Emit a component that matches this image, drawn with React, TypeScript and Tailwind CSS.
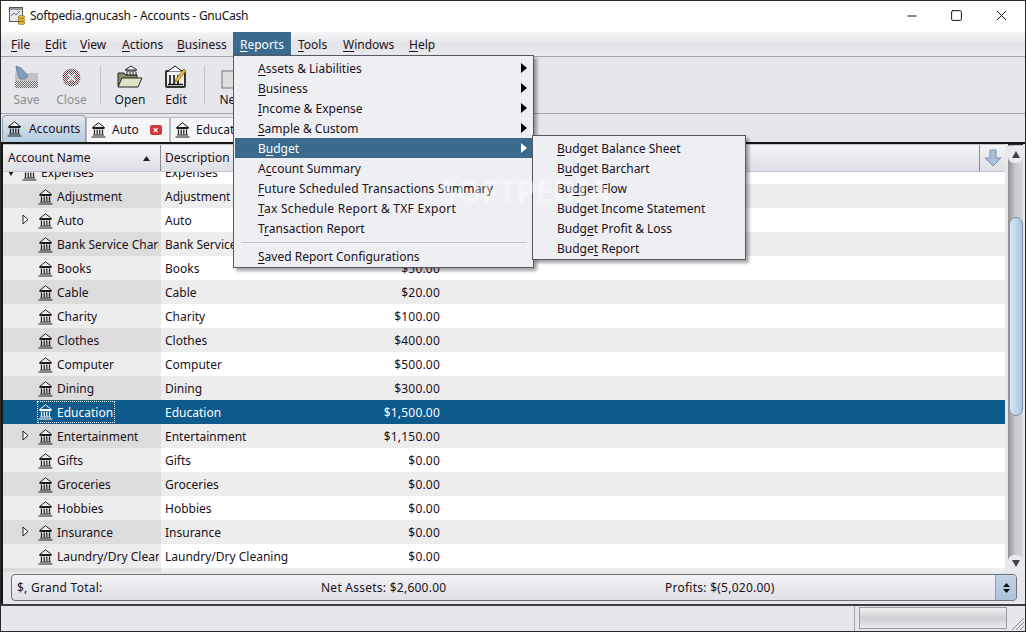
import type { ReactNode } from "react";
import { Minus, Square, X } from "lucide-react";

/** Underlines the letter that follows "_" in a menu label */
const Mnemonic = ({ text }: { text: string }) => {
    const i = text.indexOf("_");
    if (i < 0) return <>{text}</>;
    return (
        <>
            {text.slice(0, i)}
            <span className="underline underline-offset-2">{text[i + 1]}</span>
            {text.slice(i + 2)}
        </>
    );
};

/** Bank building glyph used for accounts */
const BankIcon = ({ light = false }: { light?: boolean }) => {
    const c = light ? "#ffffff" : "#1c1c1c";
    return (
        <svg width="15" height="16" viewBox="0 0 15 16" className="shrink-0">
            <path d="M7.5 0.8 L13.5 5.5 H1.5 Z" fill={light ? "#0f5a8c" : "#f4f4f4"} stroke={c} strokeWidth="1" />
            <path d="M1.5 6.5H13.5" stroke={c} strokeWidth="1" />
            <path d="M3.5 7.5V12.5M6.2 7.5V12.5M8.8 7.5V12.5M11.5 7.5V12.5" stroke={c} strokeWidth="1.2" />
            <path d="M2 13H13M0.5 15H14.5" stroke={c} strokeWidth="1.1" />
        </svg>
    );
};

/** Dither used by the disabled toolbar icons */
const Dither = ({ id, color }: { id: string; color: string }) => (
    <pattern id={id} width="2" height="2" patternUnits="userSpaceOnUse">
        <rect width="2" height="2" fill="#e6e7eb" />
        <rect width="1" height="1" fill={color} />
        <rect x="1" y="1" width="1" height="1" fill={color} />
    </pattern>
);

const rows: { name: string; desc: string; total: string; expander?: boolean }[] = [
    { name: "Adjustment", desc: "Adjustment", total: "" },
    { name: "Auto", desc: "Auto", total: "", expander: true },
    { name: "Bank Service Charge", desc: "Bank Service Charge", total: "" },
    { name: "Books", desc: "Books", total: "$50.00" },
    { name: "Cable", desc: "Cable", total: "$20.00" },
    { name: "Charity", desc: "Charity", total: "$100.00" },
    { name: "Clothes", desc: "Clothes", total: "$400.00" },
    { name: "Computer", desc: "Computer", total: "$500.00" },
    { name: "Dining", desc: "Dining", total: "$300.00" },
    { name: "Education", desc: "Education", total: "$1,500.00" },
    { name: "Entertainment", desc: "Entertainment", total: "$1,150.00", expander: true },
    { name: "Gifts", desc: "Gifts", total: "$0.00" },
    { name: "Groceries", desc: "Groceries", total: "$0.00" },
    { name: "Hobbies", desc: "Hobbies", total: "$0.00" },
    { name: "Insurance", desc: "Insurance", total: "$0.00", expander: true },
    { name: "Laundry/Dry Cleaning", desc: "Laundry/Dry Cleaning", total: "$0.00" },
];

const menuBar = [
    { label: "_File", width: "w-[34px]" },
    { label: "_Edit", width: "w-[35px]" },
    { label: "_View", width: "w-[42px]" },
    { label: "_Actions", width: "w-[55px]" },
    { label: "_Business", width: "w-[63px]" },
    { label: "_Reports", width: "w-[58px]" },
    { label: "_Tools", width: "w-[45px]" },
    { label: "_Windows", width: "w-[66px]" },
    { label: "_Help", width: "w-[40px]" },
];

const reportItems = [
    { label: "_Assets & Liabilities", sub: true },
    { label: "_Business", sub: true },
    { label: "_Income & Expense", sub: true },
    { label: "_Sample & Custom", sub: true },
    { label: "B_udget", sub: true, active: true },
    { label: "A_ccount Summary" },
    { label: "_Future Scheduled Transactions Summary", spacing: "tracking-[0.13px]" },
    { label: "_Tax Schedule Report & TXF Export", spacing: "tracking-[0.27px]" },
    { label: "T_ransaction Report" },
];

const budgetItems = [
    "_Budget Balance Sheet",
    "B_udget Barchart",
    "Bu_dget Flow",
    "Budget Income Statement",
    "Budg_et Profit & Loss",
    "Budge_t Report",
];

/** Toolbar button with icon above its label */
const ToolButton = ({ icon, label, disabled, width }: { icon: ReactNode; label: string; disabled?: boolean; width: string }) => (
    <div className={`flex shrink-0 flex-col items-center ${width}`}>
        <div className="flex h-[26px] items-end">{icon}</div>
        <span className={`mt-[3px] leading-[16px] ${disabled ? "text-[#8a8c94]" : "text-[#141414]"}`}>{label}</span>
    </div>
);

const App = () => {
    return (
        <div
            className="relative flex h-[632px] w-[1026px] flex-col overflow-hidden border border-[#2a2a2a] bg-[#e6e7eb] text-[12px] text-[#1a1020]"
            style={{ fontFamily: '"Noto Sans", sans-serif' }}>
            {/* Title bar */}
            <div className="flex h-[31px] shrink-0 items-center bg-white pb-[2px] pl-[8px]">
                <svg width="17" height="18" viewBox="0 0 17 18" className="shrink-0">
                    <rect x="0.5" y="0.5" width="13" height="14" fill="#e8e8e8" stroke="#555" />
                    <path d="M2 9l3-3 2 2 4-4" stroke="#4a6fb0" fill="none" />
                    <rect x="1" y="1" width="12" height="2" fill="#9a9a9a" />
                    <ellipse cx="12.5" cy="10" rx="3.5" ry="1.6" fill="#e0b830" stroke="#8a6a10" strokeWidth="0.6" />
                    <ellipse cx="12.5" cy="13" rx="3.5" ry="1.6" fill="#e0b830" stroke="#8a6a10" strokeWidth="0.6" />
                    <ellipse cx="12.5" cy="16" rx="3.5" ry="1.6" fill="#e0b830" stroke="#8a6a10" strokeWidth="0.6" />
                </svg>
                <span className="ml-[4px] tracking-[-0.24px] text-[#111]">Softpedia.gnucash - Accounts - GnuCash</span>
                <div className="ml-auto flex items-center pr-[1px]">
                    <div className="flex w-[45px] justify-center"><Minus size={14} strokeWidth={1} absoluteStrokeWidth /></div>
                    <div className="flex w-[45px] justify-center"><Square size={13} strokeWidth={1} absoluteStrokeWidth /></div>
                    <div className="flex w-[45px] justify-center"><X size={17} strokeWidth={1} absoluteStrokeWidth /></div>
                </div>
            </div>

            {/* Menu bar */}
            <div className="flex h-[25px] shrink-0 items-center border-b border-[#a3a3ab] bg-gradient-to-b from-[#f7f7f8] via-[#e2e3e7] to-[#e9eaee] pl-[3px]">
                {menuBar.map((m) => (
                    <div
                        key={m.label}
                        className={`flex h-[24px] items-center pt-[2px] pl-[7px] whitespace-nowrap ${m.width} ${m.label === "_Reports" ? "bg-[#3a6a8e] text-white" : ""}`}>
                        <span><Mnemonic text={m.label} /></span>
                    </div>
                ))}
            </div>

            {/* Toolbar */}
            <div className="flex h-[57px] shrink-0 items-center border-b border-[#a3a3ab] pl-[3px]">
                <ToolButton
                    width="w-[45px]"
                    disabled
                    label="Save"
                    icon={
                        <svg width="26" height="24" viewBox="0 0 26 24">
                            <defs><Dither id="saveDither" color="#6a6a6a" /></defs>
                            <path d="M1 8h23v14a1 1 0 0 1-1 1H2a1 1 0 0 1-1-1z" fill="#c2c2c2" />
                            <rect x="1" y="16" width="23" height="7" rx="1" fill="url(#saveDither)" />
                            <path d="M2 1l5 2 7 8-3 3H6L3 7z" fill="#7f9fc2" stroke="#5d7288" strokeWidth="0.8" />
                        </svg>
                    }
                />
                <ToolButton
                    width="w-[45px]"
                    disabled
                    label="Close"
                    icon={
                        <svg width="19" height="19" viewBox="0 0 19 19" className="mb-[2px]">
                            <defs><Dither id="closeDither" color="#6e3f45" /></defs>
                            <circle cx="9.5" cy="9.5" r="9" fill="url(#closeDither)" />
                            <path d="M6 6l7 7M13 6l-7 7" stroke="#e8e8e8" strokeWidth="2.4" />
                        </svg>
                    }
                />
                <div className="mr-[5px] ml-[6px] h-[38px] w-px bg-[#c4c4c9]" />
                <ToolButton
                    width="w-[48px]"
                    label="Open"
                    icon={
                        <svg width="26" height="24" viewBox="0 0 26 24">
                            <path d="M1 8h6l2 2h11v11H1z" fill="#8c8c68" stroke="#222" />
                            <path d="M1 22l4-9h20l-4 9z" fill="#e2e2c4" stroke="#222" />
                            <path d="M14 1l6 4H8z" fill="#fff" stroke="#222" />
                            <path d="M9 6h10M10 7v4M13 7v4M16 7v4M19 7v4" stroke="#222" />
                        </svg>
                    }
                />
                <ToolButton
                    width="w-[44px]"
                    label="Edit"
                    icon={
                        <svg width="24" height="24" viewBox="0 0 24 24">
                            <rect x="1" y="5" width="21" height="18" rx="2" fill="#333" />
                            <path d="M11 1l8 6H3z" fill="#fff" stroke="#111" />
                            <rect x="3" y="7" width="17" height="14" fill="#f2f2f2" />
                            <path d="M6 10v9M10 10v9M14 10v9M4 19.5h15" stroke="#111" strokeWidth="1.6" />
                            <path d="M12 14l8-10 2 2-8 10-3 1z" fill="#e8c040" stroke="#7a5a10" strokeWidth="0.7" />
                        </svg>
                    }
                />
                <div className="mr-[5px] ml-[6px] h-[38px] w-px bg-[#c4c4c9]" />
                <ToolButton
                    width="w-[44px]"
                    label="New"
                    icon={
                        <svg width="24" height="24" viewBox="0 0 24 24">
                            <rect x="2" y="6" width="19" height="17" fill="#ddd" stroke="#777" />
                        </svg>
                    }
                />
            </div>

            {/* Tabs */}
            <div className="flex h-[30px] shrink-0 items-end border-b-2 border-[#161616] pl-px">
                <div className="flex h-[27px] w-[84px] items-center gap-[7px] rounded-t-[4px] border border-b-0 border-[#8fa0b4] bg-gradient-to-b from-[#e4e8ee] to-[#b4cbe0] pl-[4px]">
                    <BankIcon />
                    <span>Accounts</span>
                </div>
                <div className="flex h-[25px] w-[84px] items-center gap-[6px] border-x border-t border-[#b9b9be] bg-[#f6f6f8] pl-[4px]">
                    <BankIcon />
                    <span>Auto</span>
                    <span className="ml-[5px] flex h-[10px] w-[12px] items-center justify-center rounded-[2px] bg-[#d0383c] text-[10px] leading-none font-bold text-white">
                        ×
                    </span>
                </div>
                <div className="flex h-[25px] w-[90px] items-center gap-[6px] border-x border-t border-[#b9b9be] bg-[#f6f6f8] pl-[4px]">
                    <BankIcon />
                    <span>Education</span>
                </div>
            </div>

            {/* Page */}
            <div className="flex min-h-0 flex-1 border-l-2 border-[#161616]">
                <div className="flex min-w-0 flex-1 flex-col">
                    <div className="flex min-h-0 flex-1">
                        <div className="mr-[3px] flex min-w-0 flex-1 flex-col">
                            {/* Tree header */}
                            <div className="flex h-[28px] shrink-0 items-stretch border-y border-[#c4c4ca] bg-gradient-to-b from-[#f5f5f7] via-[#e8e9ed] to-[#dfe0e5]">
                                <div className="flex w-[158px] shrink-0 items-center justify-between border-r border-[#8a8a90] pr-[10px] pl-[5px]">
                                    <span>Account Name</span>
                                    <svg width="7" height="5" viewBox="0 0 7 5"><path d="M3.5 0L7 5H0z" fill="#222" /></svg>
                                </div>
                                <div className="flex w-[140px] shrink-0 items-center border-r border-[#8a8a90] pl-[4px]">Description</div>
                                <div className="flex-1" />
                                <div className="flex w-[26px] shrink-0 items-center justify-center border-l border-[#8a8a90]">
                                    <svg width="18" height="18" viewBox="0 0 18 18">
                                        <path d="M6 1h6v8h5l-8 8-8-8h5z" fill="#a9bfdc" stroke="#7c92b0" strokeLinejoin="round" />
                                    </svg>
                                </div>
                            </div>

                            {/* Tree rows */}
                            <div className="min-h-0 flex-1 overflow-hidden">
                                <div className="-mt-[12px] flex h-[24px] items-center bg-white pt-[2px]">
                                    <div className="relative -mt-[2px] flex h-[24px] w-[158px] shrink-0 items-center self-start bg-[#ededed] pt-[2px] pl-[19px]">
                                        <svg width="6" height="5" viewBox="0 0 6 5" className="absolute top-[11px] left-[5px]">
                                            <path d="M0 0h6L3 5z" fill="#222" />
                                        </svg>
                                        <BankIcon />
                                        <span className="ml-[4px]">Expenses</span>
                                    </div>
                                    <div className="pl-[4px]">Expenses</div>
                                </div>
                                {rows.map((row, i) => {
                                    const selected = row.name === "Education";
                                    const shade = i % 2 === 0;
                                    return (
                                        <div
                                            key={row.name}
                                            className={`flex h-[24px] items-center ${selected ? "bg-[#0f5a8c] text-white" : shade ? "bg-[#ededed]" : "bg-white"}`}>
                                            <div
                                                className={`relative flex h-full w-[158px] shrink-0 items-center pt-[2px] pr-[2px] pl-[35px] ${selected ? "" : shade ? "bg-[#dcdcdc]" : "bg-[#ededed]"}`}>
                                                {row.expander && (
                                                    <svg width="7" height="11" viewBox="0 0 7 11" className="absolute top-[6px] left-[19px]">
                                                        <path d="M1 1l5 4.5L1 10z" fill="#fff" stroke="#222" />
                                                    </svg>
                                                )}
                                                {selected ? (
                                                    <div className="-mt-[2px] -ml-[1px] flex h-[22px] items-center border border-dotted border-white pr-[1px]">
                                                        <BankIcon light />
                                                        <span className="ml-[4px] pt-[2px]">{row.name}</span>
                                                    </div>
                                                ) : (
                                                    <>
                                                        <BankIcon />
                                                        <span className="ml-[4px] min-w-0 overflow-hidden whitespace-nowrap">{row.name}</span>
                                                    </>
                                                )}
                                            </div>
                                            <div className="w-[140px] shrink-0 overflow-hidden pt-[2px] pl-[4px] whitespace-nowrap">{row.desc}</div>
                                            <div className="w-[139px] pt-[2px] text-right tracking-[0.2px]">{row.total}</div>
                                        </div>
                                    );
                                })}
                                <div className="flex h-[24px] bg-[#ededed]">
                                    <div className="h-full w-[158px] bg-[#dcdcdc]" />
                                </div>
                            </div>
                        </div>

                        {/* Scrollbar */}
                        <div className="mr-[2px] flex w-[15px] shrink-0 flex-col border-t border-[#2a2a2a] bg-gradient-to-r from-[#8e9096] via-[#c8cad0] to-[#d6d8dd] pt-[1px]">
                            <div className="flex h-[17px] shrink-0 items-center justify-center rounded-b-[6px] bg-[#e9eaee]">
                                <svg width="8" height="7" viewBox="0 0 8 7"><path d="M4 0l4 7H0z" fill="#444" /></svg>
                            </div>
                            <div className="h-[54px] shrink-0" />
                            <div className="ml-px h-[199px] shrink-0 rounded-[7px] border border-[#7f8fa4] bg-gradient-to-r from-[#dbe6f1] to-[#a9c6e0]" />
                            <div className="flex-1" />
                            <div className="flex h-[17px] shrink-0 items-center justify-center rounded-t-[6px] bg-[#e9eaee]">
                                <svg width="8" height="7" viewBox="0 0 8 7"><path d="M0 0h8L4 7z" fill="#444" /></svg>
                            </div>
                        </div>
                    </div>

                    {/* Grand total */}
                    <div className="shrink-0 pt-[2px] pr-[8px] pb-[3px] pl-[8px]">
                        <div className="flex h-[27px] items-center rounded-[4px] border border-[#70727a] bg-gradient-to-b from-[#f3f3f6] to-[#dfe0e6] tracking-[0.25px]">
                            <span className="ml-[5px] w-[304px] shrink-0">$, Grand Total:</span>
                            <span className="w-[344px] shrink-0">Net Assets: $2,600.00</span>
                            <span>Profits: $(5,020.00)</span>
                            <div className="ml-auto flex h-full w-[21px] flex-col items-center justify-center gap-[2px] rounded-r-[3px] border-l border-[#8fa0b4] bg-gradient-to-b from-[#c4d4e4] to-[#a8c2da]">
                                <svg width="7" height="4" viewBox="0 0 7 4"><path d="M3.5 0L7 4H0z" fill="#111" /></svg>
                                <svg width="7" height="4" viewBox="0 0 7 4"><path d="M0 0h7L3.5 4z" fill="#111" /></svg>
                            </div>
                        </div>
                    </div>
                </div>
            </div>

            {/* Status bar */}
            <div className="relative flex h-[27px] shrink-0 items-stretch border-t-2 border-[#3c3c42]">
                <div className="flex-1 border-r border-[#a3a3ab]" />
                <div className="mt-[1px] mr-[18px] mb-[2px] ml-[4px] w-[148px] border border-[#9a9aa0] bg-gradient-to-b from-[#f0f0f2] via-[#cfd0d3] to-[#e8e9eb]" />
                <svg width="16" height="16" viewBox="0 0 16 16" className="absolute right-0 bottom-0">
                    <path d="M15 3L3 15M15 7L7 15M15 11L11 15" stroke="#8a8a90" />
                </svg>
            </div>

            {/* Reports menu */}
            <div className="absolute top-[54px] left-[232px] z-10 w-[301px] border border-[#55585e] bg-[#eeeff2] pt-[2px] pb-[1px] pl-px shadow-[3px_3px_3px_rgba(0,0,0,0.35)]">
                {reportItems.map((item) => (
                    <div
                        key={item.label}
                        className={`flex h-[20px] items-center justify-between pt-[2px] pr-[6px] pl-[23px] ${item.active ? "bg-[#3a6a8e] text-white" : ""}`}>
                        <span className={item.spacing}><Mnemonic text={item.label} /></span>
                        {item.sub && (
                            <svg width="6" height="10" viewBox="0 0 6 10" className="-mt-[2px]">
                                <path d="M0 0l6 5-6 5z" fill={item.active ? "#fff" : "#000"} />
                            </svg>
                        )}
                    </div>
                ))}
                <div className="flex h-[8px] items-center px-[6px]">
                    <div className="h-px w-full bg-[#c2c3c7]" />
                </div>
                <div className="flex h-[20px] items-center pt-[2px] pl-[23px]">
                    <span><Mnemonic text="_Saved Report Configurations" /></span>
                </div>
            </div>

            {/* Budget submenu */}
            <div className="absolute top-[134px] left-[531px] z-20 w-[214px] border border-[#55585e] bg-[#eeeff2] pt-[2px] pb-[1px] shadow-[3px_3px_3px_rgba(0,0,0,0.35)]">
                {budgetItems.map((item) => (
                    <div key={item} className="flex h-[20px] items-center pt-[2px] pl-[24px]">
                        <span><Mnemonic text={item} /></span>
                    </div>
                ))}
            </div>

            {/* Watermark */}
            <div className="pointer-events-none absolute top-[170px] left-[438px] z-30 text-[32px] leading-[40px] font-bold tracking-[-0.5px] text-white opacity-40">
                SOFTPEDIA
            </div>
        </div>
    );
};

export default App;
